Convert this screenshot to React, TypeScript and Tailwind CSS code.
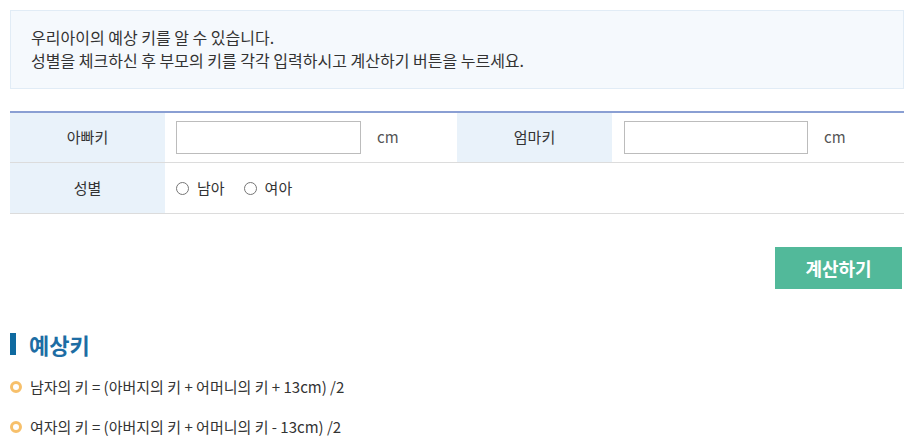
import { useState } from "react";

const font = { fontFamily: '"Noto Sans CJK KR", "Noto Sans", sans-serif' };

export default function App() {
  const [dad, setDad] = useState("");
  const [mom, setMom] = useState("");
  const [gender, setGender] = useState("");

  return (
    <div className="bg-white pl-[10px] pr-[7px] pt-[10px] text-[#333]" style={font}>
      {/* Intro */}
      <div className="border border-[#e1ecf6] bg-[#f5f9fd] px-[20px] pt-[15px] pb-[16px] text-[16px] leading-[23px]">
        <p>우리아이의 예상 키를 알 수 있습니다.</p>
        <p>성별을 체크하신 후 부모의 키를 각각 입력하시고 계산하기 버튼을 누르세요.</p>
      </div>

      {/* Form table */}
      <div className="mt-[22px] grid grid-cols-[155px_1fr_155px_1fr] border-t-2 border-[#8a9fd3] text-[15px]">
        <div className="flex h-[50px] items-center justify-center border-b border-[#dcdcdc] bg-[#e9f2fa]">아빠키</div>
        <div className="flex h-[50px] items-center gap-[16px] border-b border-[#dcdcdc] pl-[11px]">
          <input
            value={dad}
            onChange={(e) => setDad(e.target.value)}
            className="h-[33px] w-[185px] border border-[#bcbcbc] bg-white px-2 outline-none"
          />
          <span className="text-[#555]">cm</span>
        </div>
        <div className="flex h-[50px] items-center justify-center border-b border-[#dcdcdc] bg-[#e9f2fa]">엄마키</div>
        <div className="flex h-[50px] items-center gap-[16px] border-b border-[#dcdcdc] pl-[12px]">
          <input
            value={mom}
            onChange={(e) => setMom(e.target.value)}
            className="h-[33px] w-[184px] border border-[#bcbcbc] bg-white px-2 outline-none"
          />
          <span className="text-[#555]">cm</span>
        </div>

        <div className="flex h-[51px] items-center justify-center border-b border-[#dcdcdc] bg-[#e9f2fa]">성별</div>
        <div className="col-span-3 flex h-[51px] items-center gap-[19px] border-b border-[#dcdcdc] pl-[11px] text-[15px]">
          {["남아", "여아"].map((g) => (
            <label key={g} className="flex cursor-pointer items-center gap-[8px]">
              <span
                onClick={() => setGender(g)}
                className="flex h-[13px] w-[13px] shrink-0 items-center justify-center rounded-full border border-[#767676] bg-white"
              >
                {gender === g && <span className="h-[6px] w-[6px] rounded-full bg-[#333]" />}
              </span>
              <span onClick={() => setGender(g)}>{g}</span>
            </label>
          ))}
        </div>
      </div>

      {/* Submit */}
      <div className="mt-[33px] flex justify-end pr-[2px]">
        <button className="h-[42px] w-[127px] bg-[#52b99a] text-[18px] font-bold text-white">계산하기</button>
      </div>

      {/* Result */}
      <div className="mt-[44px] flex items-center gap-[13px]">
        <span className="h-[22px] w-[6px] bg-[#0f6aa0]" />
        <h3 className="text-[22px] font-bold leading-[22px] text-[#1d6da4]">예상키</h3>
      </div>
      <ul className="mt-[21px] space-y-[18px] text-[15px]">
        <li className="flex items-center gap-[8px] leading-[22px]">
          <span className="h-[12px] w-[12px] shrink-0 rounded-full border-[3px] border-[#f7c06b]" />
          남자의 키 = (아버지의 키 + 어머니의 키 + 13cm) /2
        </li>
        <li className="flex items-center gap-[8px] leading-[22px]">
          <span className="h-[12px] w-[12px] shrink-0 rounded-full border-[3px] border-[#f7c06b]" />
          여자의 키 = (아버지의 키 + 어머니의 키 - 13cm) /2
        </li>
      </ul>
    </div>
  );
}
